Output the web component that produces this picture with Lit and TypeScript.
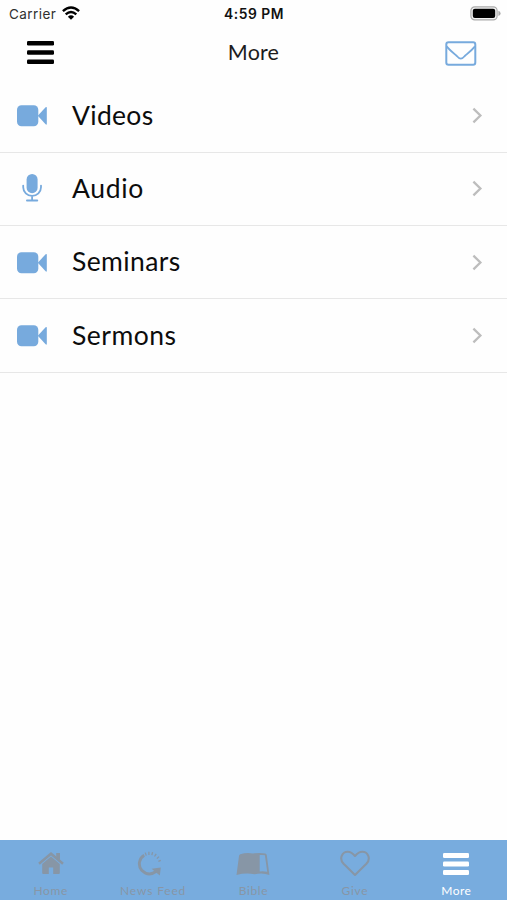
import { LitElement, html, css, svg } from "lit";
import { customElement } from "lit/decorators.js";

const video = html`<svg width="30" height="22" viewBox="0 0 30 22" fill="#77aadd">
  <rect x="0" y="0.3" width="21.3" height="21" rx="4.5"></rect>
  <path d="M20.8 10.8 28.6 2.3Q29.8 1.4 29.8 2.8V18.8Q29.8 20.2 28.6 19.3Z"></path>
</svg>`;

const mic = html`<svg width="20" height="28" viewBox="0 0 20 28" fill="none" stroke="#77aadd">
  <rect x="4.6" y="0" width="11" height="19.2" rx="5.5" fill="#77aadd" stroke="none"></rect>
  <path d="M1.2 11.6V13.2a8.9 8.6 0 0 0 17.8 0V11.6M10.1 21.9V26" stroke-width="1.8" stroke-linecap="round"></path>
  <path d="M5 26.6H15.2" stroke-width="2" stroke-linecap="round"></path>
</svg>`;

const chevron = html`<svg width="11" height="17" viewBox="0 0 11 17" fill="none" stroke="#bdbdbd" stroke-width="2.3">
  <path d="M1.4 1.6 8.4 8.5 1.4 15.4"></path>
</svg>`;

const bars = (w: number, h: number, t: number) => html`<svg width=${w} height=${h} viewBox="0 0 ${w} ${h}" fill="currentColor">
  ${[0, (h - t) / 2, h - t].map((y) => svg`<rect x="0" y=${y} width=${w} height=${t} rx="1.3"></rect>`)}
</svg>`;

const home = html`<svg width="26" height="23" viewBox="0 0 26 23" fill="currentColor">
  <path d="M13 4.6 21.8 12V21Q21.8 22 20.8 22H15.2V15.6H10.8V22H5.2Q4.2 22 4.2 21V12Z"></path>
  <path d="M1 11.8 13 1.7 25 11.8" fill="none" stroke="currentColor" stroke-width="2.5"></path>
  <path d="M18.2 1H22V9L18.2 6Z"></path>
</svg>`;

const feed = html`<svg width="25" height="25" viewBox="0 0 25 25" fill="none" stroke="currentColor">
  <path d="M7.2 4.2A10 10 0 0 0 4.7 19.2Q11.5 26 19.4 20.3" stroke-width="2.9"></path>
  <path d="M14.6 17.8 23.8 16.6 22.8 24.6Z" fill="currentColor" stroke="none"></path>
  <path d="M8.2 1.6 9.3 4.6M11.9 .8V4M15.6 1.1 14.8 4.2M19.2 2.8 17.5 5.5M22 5.6 19.9 7.6M23.8 9.4 21.4 10.3" stroke-width="1.3"></path>
</svg>`;

const bible = html`<svg width="34" height="24" viewBox="0 0 34 24">
  <path d="M4.2 2.2Q11 .2 17 1.5Q24 .3 29.3 1.6Q30.6 2 30.8 3.2L33.4 23Q27 20.4 18.6 22.2Q9.2 20.6.5 23L3 4Q3.2 2.6 4.2 2.2Z" fill="currentColor"></path>
  <path d="M23.7 3.1Q26.7 2.7 28.9 3.3L31.2 19.8Q27.4 18.8 23.7 19.4Z" fill="#78acde"></path>
</svg>`;

const heart = html`<svg width="30" height="27" viewBox="0 0 30 27" fill="none" stroke="currentColor" stroke-width="2.1" stroke-linejoin="round">
  <path d="M15 25 3.6 13.8C-1.2 8.7 2 1.7 7.7 1.7C11.4 1.7 13.2 3.7 15 6C16.8 3.7 18.6 1.7 22.3 1.7C28 1.7 31.2 8.7 26.4 13.8Z"></path>
</svg>`;

const rows = [
  { name: "Videos", icon: video, cls: "videos" },
  { name: "Audio", icon: mic, cls: "audio" },
  { name: "Seminars", icon: video, cls: "seminars" },
  { name: "Sermons", icon: video, cls: "sermons" },
];

const tabs = [
  { name: "Home", icon: home, cls: "" },
  { name: "News Feed", icon: feed, cls: "feed" },
  { name: "Bible", icon: bible, cls: "" },
  { name: "Give", icon: heart, cls: "" },
  { name: "More", icon: bars(26, 22, 5), cls: "active" },
];

@customElement("app-root")
export class AppRoot extends LitElement {
  static styles = css`
    :host {
      display: flex;
      flex-direction: column;
      height: 900px;
      background: #fefefe;
      color: #0c0c0c;
      font-family: Lato, sans-serif;
      overflow: hidden;
    }
    svg { display: block; flex: none; }
    .status {
      box-sizing: border-box;
      display: grid;
      grid-template-columns: 1fr auto 1fr;
      align-items: center;
      height: 27px;
      padding: 0 6px 0 9px;
      font: 13.5px/27px Inter, sans-serif;
    }
    .carrier { display: flex; align-items: center; gap: 6px; color: #303030; letter-spacing: 0.42px; }
    .carrier svg { margin-top: -2px; }
    .time { font-weight: 600; font-size: 13.8px; letter-spacing: 0.55px; color: #111; margin-right: 2px; padding-top: 1px; }
    .battery { justify-self: end; margin-top: -1px; }
    .header {
      box-sizing: border-box;
      display: grid;
      grid-template-columns: 1fr auto 1fr;
      align-items: center;
      height: 52px;
      padding: 0 30px 0 27px;
    }
    .menu { color: #000; margin-top: -2px; }
    .title { font-size: 21.5px; line-height: 51px; height: 52px; letter-spacing: 0.2px; color: #1c1c1c; padding-left: 1px; margin-right: -2px; }
    .mail { justify-self: end; }
    .list { display: flex; flex-direction: column; }
    .row {
      box-sizing: border-box;
      display: flex;
      align-items: center;
      height: 73.3px;
      border-bottom: 1px solid #e7e7e7;
      padding: 0 24px 0 17px;
    }
    .row:first-of-type { height: 73.6px; }
    .row:last-of-type { height: 73.9px; }
    .icon { width: 30px; display: flex; justify-content: center; padding-top: 1px; }
    .icon:has(+ .audio) { padding: 0 0 1px; }
    .label { flex: 1; margin-left: 25px; font-size: 26.5px; line-height: 71px; padding-bottom: 0.4px; }
    .videos { letter-spacing: 0.3px; }
    .audio { letter-spacing: 0.65px; }
    .seminars { letter-spacing: 0.4px; }
    .sermons { letter-spacing: 0.5px; }
    .space { flex: 1; }
    .tabs {
      display: grid;
      grid-template-columns: repeat(5, 1fr);
      height: 60px;
      background: #78acde;
      color: #8796a6;
    }
    .tab { display: flex; flex-direction: column; align-items: center; }
    .glyph { height: 45px; display: flex; align-items: center; padding-top: 1px; }
    .feed .glyph { margin-right: 6px; }
    .name { font-size: 12px; line-height: 14px; margin-top: -2px; letter-spacing: 0.65px; white-space: nowrap; }
    .feed .name { letter-spacing: 0.85px; margin-left: 2px; }
    .active { color: #fff; }
    .active .name { letter-spacing: 0.5px; }
  `;

  render() {
    return html`
      <div class="status">
        <div class="carrier">
          <span>Carrier</span>
          <svg width="18" height="14" viewBox="0 0 18 14" fill="none" stroke="#000" stroke-width="2.4">
            <path d="M.9 5.2Q9-2.2 17.1 5.2M3.7 8.3Q9 3.6 14.3 8.3"></path>
            <path d="M9 13.8 5.9 10.7Q9 7.9 12.1 10.7Z" fill="#000" stroke="none"></path>
          </svg>
        </div>
        <span class="time">4:59 PM</span>
        <svg class="battery" width="31" height="15" viewBox="0 0 31 15">
          <rect x=".9" y=".9" width="26.2" height="13" rx="3.8" fill="#f4f4f4" stroke="#aaa" stroke-width="1.2"></rect>
          <rect x="2.8" y="2.7" width="22.4" height="9.4" rx="2" fill="#000"></rect>
          <path d="M28.4 4.8Q30.6 5.7 30.6 7.4T28.4 10Z" fill="#aaa"></path>
        </svg>
      </div>
      <div class="header">
        <span class="menu">${bars(27, 23, 4.6)}</span>
        <span class="title">More</span>
        <svg class="mail" width="32" height="25" viewBox="0 0 32 25" fill="none" stroke="#77aadd" stroke-width="2">
          <rect x="1.3" y="1.2" width="29" height="22.6" rx="2.2"></rect>
          <path d="M1.6 5.3C5 9.4 8.4 12 11.8 15Q14 17.6 15.8 17.6T19.8 15C23.2 12 26.6 9.4 30 5.3" stroke-width="1.9"></path>
        </svg>
      </div>
      <div class="list">
        ${rows.map((r) => html`<div class="row">
          <span class="icon">${r.icon}</span>
          <span class="label ${r.cls}">${r.name}</span>
          ${chevron}
        </div>`)}
      </div>
      <div class="space"></div>
      <div class="tabs">
        ${tabs.map((t) => html`<div class="tab ${t.cls}">
          <span class="glyph">${t.icon}</span>
          <span class="name">${t.name}</span>
        </div>`)}
      </div>
    `;
  }
}
